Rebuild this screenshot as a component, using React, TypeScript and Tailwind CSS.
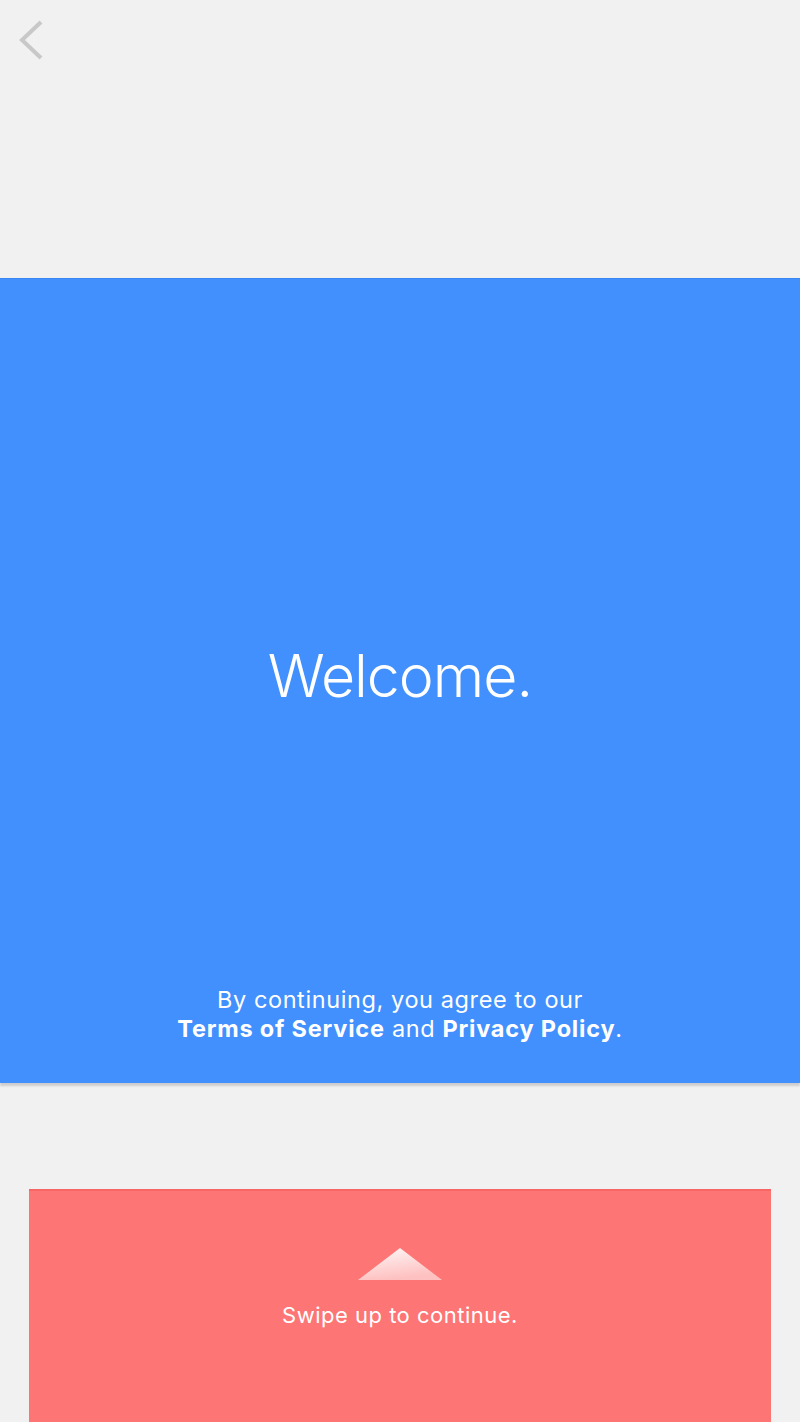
export default function App() {
    return (
        <div
            className="w-[800px] h-[1422px] overflow-hidden bg-[#f1f1f1] flex flex-col"
            style={{ fontFamily: "Inter, 'Liberation Sans', sans-serif" }}
        >
            {/* top bar with back chevron */}
            <div className="h-[278px] shrink-0 px-[19px] pt-[19px]">
                <svg width="26" height="42" viewBox="0 0 26 42" fill="none">
                    <path d="M22 3 L3 21 L22 39" stroke="#c8c8c8" strokeWidth="4" strokeLinecap="butt" />
                </svg>
            </div>

            {/* welcome panel */}
            <div className="h-[805px] shrink-0 bg-[#428ffe] border-t border-[#3b86f5] shadow-[0_3px_2px_rgba(0,0,0,0.15)] flex flex-col items-center text-white">
                <div className="flex-1 flex items-center justify-center pt-[86px]">
                    <h1 className="text-[59px] font-light tracking-[-1px] leading-none">Welcome.</h1>
                </div>
                <p className="text-[23.5px] leading-[29px] tracking-[0.6px] text-center mb-[40px]">
                    By continuing, you agree to our
                    <br />
                    <span className="font-bold tracking-[0.8px]">Terms of Service</span> and{" "}
                    <span className="font-bold tracking-[0.8px]">Privacy Policy</span>.
                </p>
            </div>

            {/* swipe card */}
            <div className="flex-1 px-[29px] pt-[106px]">
                <div className="h-full bg-[#fd7575] border-t-2 border-[#f86565] flex flex-col items-center pt-[56px] text-white">
                    <svg width="86" height="34" viewBox="0 0 86 34">
                        <defs>
                            <linearGradient id="tri" x1="0" y1="0" x2="0.3" y2="1">
                                <stop offset="0" stopColor="#ffffff" stopOpacity="0.95" />
                                <stop offset="1" stopColor="#ffffff" stopOpacity="0.55" />
                            </linearGradient>
                        </defs>
                        <polygon points="43,1 85,33 1,33" fill="url(#tri)" />
                    </svg>
                    <p className="mt-[18px] text-[22px] tracking-[0.5px]">Swipe up to continue.</p>
                </div>
            </div>
        </div>
    );
}
